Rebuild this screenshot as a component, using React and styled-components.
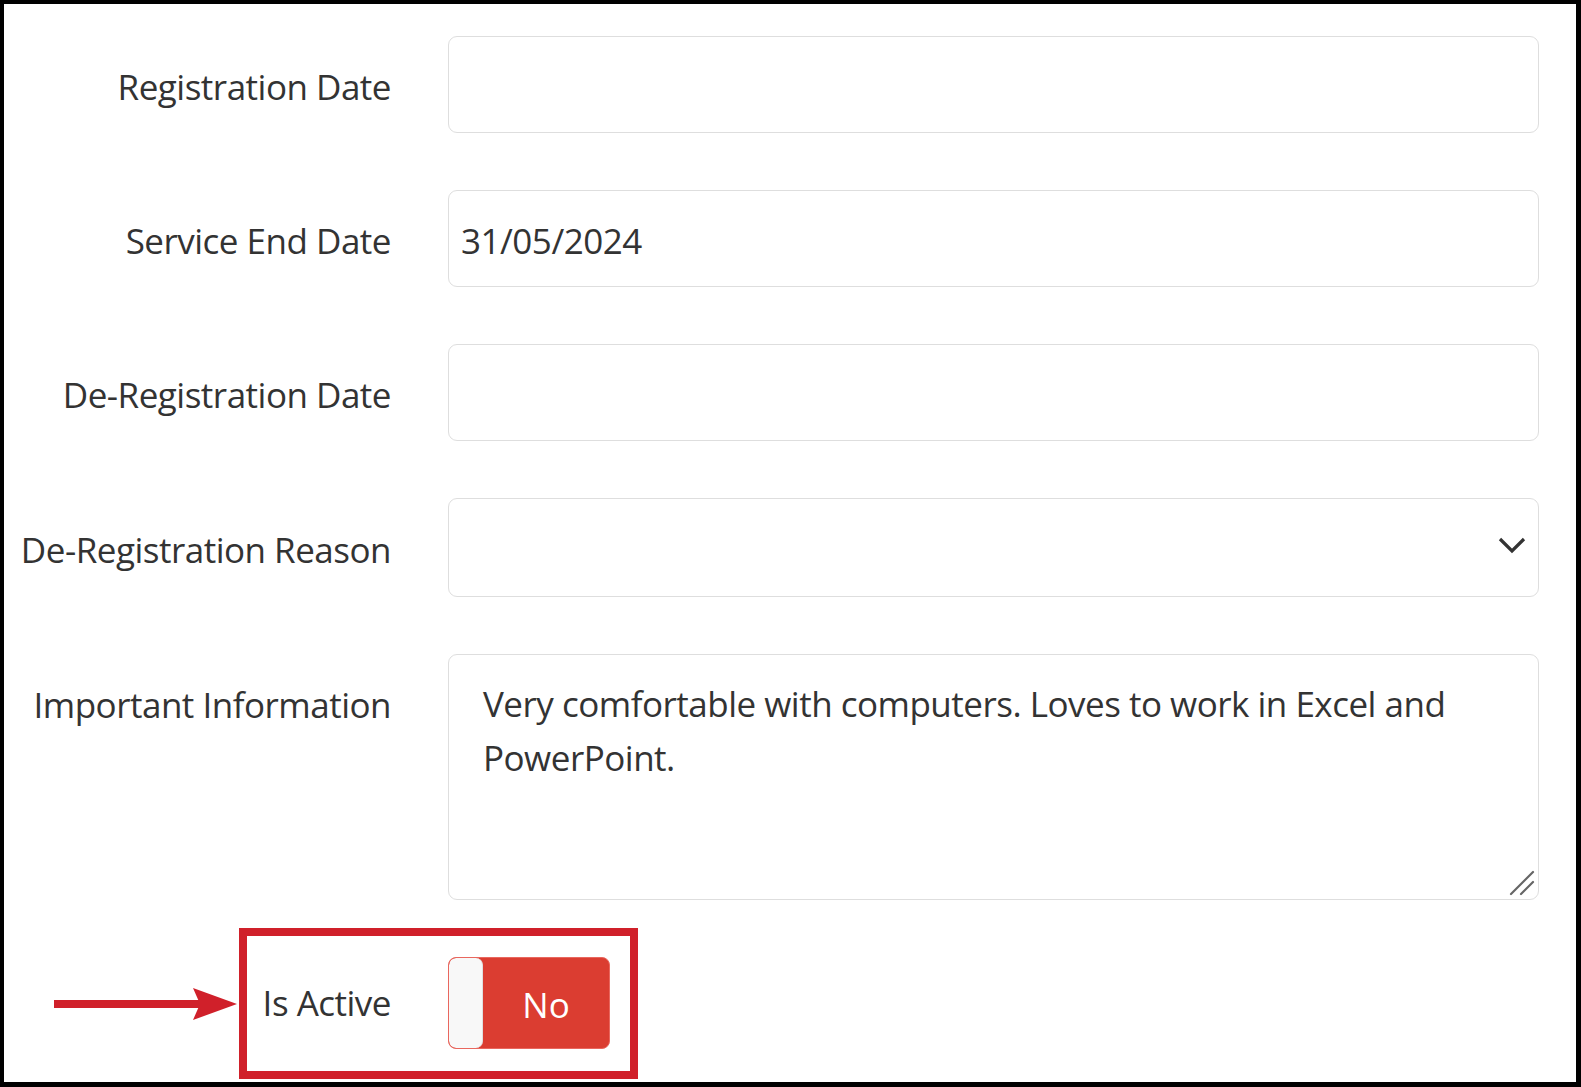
import React from 'react'
import styled, { createGlobalStyle } from 'styled-components'

const GlobalStyle = createGlobalStyle`
  html, body {
    margin: 0;
    padding: 0;
    background: #000;
  }
  body {
    font-family: "Open Sans", "Noto Sans", sans-serif;
    color: #333;
  }
`

const Frame = styled.div`
  box-sizing: border-box;
  width: 1581px;
  height: 1087px;
  border-style: solid;
  border-color: #000;
  border-width: 4px 5px 5px 4px;
  background: #fff;
  padding-top: 32px;
  overflow: hidden;
`

const Fields = styled.div`
  display: flex;
  flex-direction: column;
  gap: 57px;
`

const Field = styled.div`
  display: grid;
  grid-template-columns: 387px 1091px;
  column-gap: 57px;
  align-items: ${(p) => (p.top ? 'start' : 'center')};
`

const Label = styled.label`
  text-align: right;
  font-size: 35px;
  letter-spacing: -0.5px;
  line-height: 54px;
  color: #333;
  white-space: nowrap;
  padding-top: ${(p) => (p.top ? '24px' : '4px')};
`

const Input = styled.input`
  box-sizing: border-box;
  width: 100%;
  height: 97px;
  border: 1.5px solid #dedede;
  border-radius: 9px;
  padding: 4px 12px 0;
  font-family: inherit;
  font-size: 35px;
  letter-spacing: -0.5px;
  color: #333;
  background: #fff;
  outline: none;
`

const SelectWrap = styled.div`
  position: relative;
  height: 99px;
`

const Select = styled.select`
  box-sizing: border-box;
  width: 100%;
  height: 100%;
  border: 1.5px solid #dedede;
  border-radius: 9px;
  background: #fff;
  appearance: none;
  font-family: inherit;
  font-size: 35px;
  color: #333;
  padding: 0 12px;
  outline: none;
`

const Chevron = styled.svg`
  position: absolute;
  right: 13px;
  top: 38px;
  pointer-events: none;
`

const AreaWrap = styled.div`
  position: relative;
  height: 246px;
`

const TextArea = styled.textarea`
  box-sizing: border-box;
  width: 100%;
  height: 100%;
  border: 1.5px solid #dedede;
  border-radius: 9px;
  padding: 22px 34px;
  font-family: inherit;
  font-size: 35px;
  letter-spacing: -0.5px;
  line-height: 54px;
  color: #333;
  resize: none;
  outline: none;
`

const Grip = styled.svg`
  position: absolute;
  right: 4px;
  bottom: 4px;
  pointer-events: none;
`

const AnnotatedRow = styled.div`
  display: flex;
  align-items: center;
  margin-top: 28px;
  padding-left: 50px;
`

const Arrow = styled.svg`
  display: block;
  flex: none;
`

const Highlight = styled.div`
  display: flex;
  align-items: center;
  border: 8px solid #d0202a;
  padding: 21px 20px 22px 15px;
`

const ActiveLabel = styled.span`
  font-size: 35px;
  letter-spacing: -0.5px;
  line-height: 54px;
  color: #333;
  width: 129px;
  text-align: right;
  white-space: nowrap;
  margin-right: 57px;
`

const Toggle = styled.div`
  box-sizing: border-box;
  display: flex;
  width: 162px;
  height: 92px;
  border: 1.5px solid #e9675e;
  border-radius: 8px;
  overflow: hidden;
  background: #db3d31;
`

const Knob = styled.div`
  width: 33px;
  background: #f8f8f8;
  border-right: 1px solid #e0e0e0;
  border-radius: 7px;
`

const ToggleText = styled.div`
  flex: 1;
  display: flex;
  align-items: center;
  justify-content: center;
  color: #fff;
  font-size: 35px;
  padding-top: 2px;
`

export default function App() {
  return (
    <>
      <GlobalStyle />
      <Frame>
        <Fields>
          <Field>
            <Label>Registration Date</Label>
            <Input type="text" defaultValue="" />
          </Field>
          <Field>
            <Label>Service End Date</Label>
            <Input type="text" defaultValue="31/05/2024" />
          </Field>
          <Field>
            <Label>De-Registration Date</Label>
            <Input type="text" defaultValue="" />
          </Field>
          <Field>
            <Label>De-Registration Reason</Label>
            <SelectWrap>
              <Select defaultValue="">
                <option value=""></option>
              </Select>
              <Chevron width="28" height="20" viewBox="0 0 28 20">
                <path d="M2 3 L14 15 L26 3" fill="none" stroke="#333" strokeWidth="3.2" />
              </Chevron>
            </SelectWrap>
          </Field>
          <Field top>
            <Label top>Important Information</Label>
            <AreaWrap>
              <TextArea defaultValue="Very comfortable with computers. Loves to work in Excel and PowerPoint." />
              <Grip width="26" height="26" viewBox="0 0 26 26">
                <path d="M2 24 L24 2 M12 24 L24 12" stroke="#666" strokeWidth="2.2" strokeLinecap="round" />
              </Grip>
            </AreaWrap>
          </Field>
        </Fields>
        <AnnotatedRow>
          <Arrow width="185" height="34" viewBox="0 0 185 34">
            <rect x="0" y="13" width="150" height="8" fill="#d0202a" />
            <path d="M139 1 L183 17 L139 33 L146 17 Z" fill="#d0202a" />
          </Arrow>
          <Highlight>
            <ActiveLabel>Is Active</ActiveLabel>
            <Toggle>
              <Knob />
              <ToggleText>No</ToggleText>
            </Toggle>
          </Highlight>
        </AnnotatedRow>
      </Frame>
    </>
  )
}
